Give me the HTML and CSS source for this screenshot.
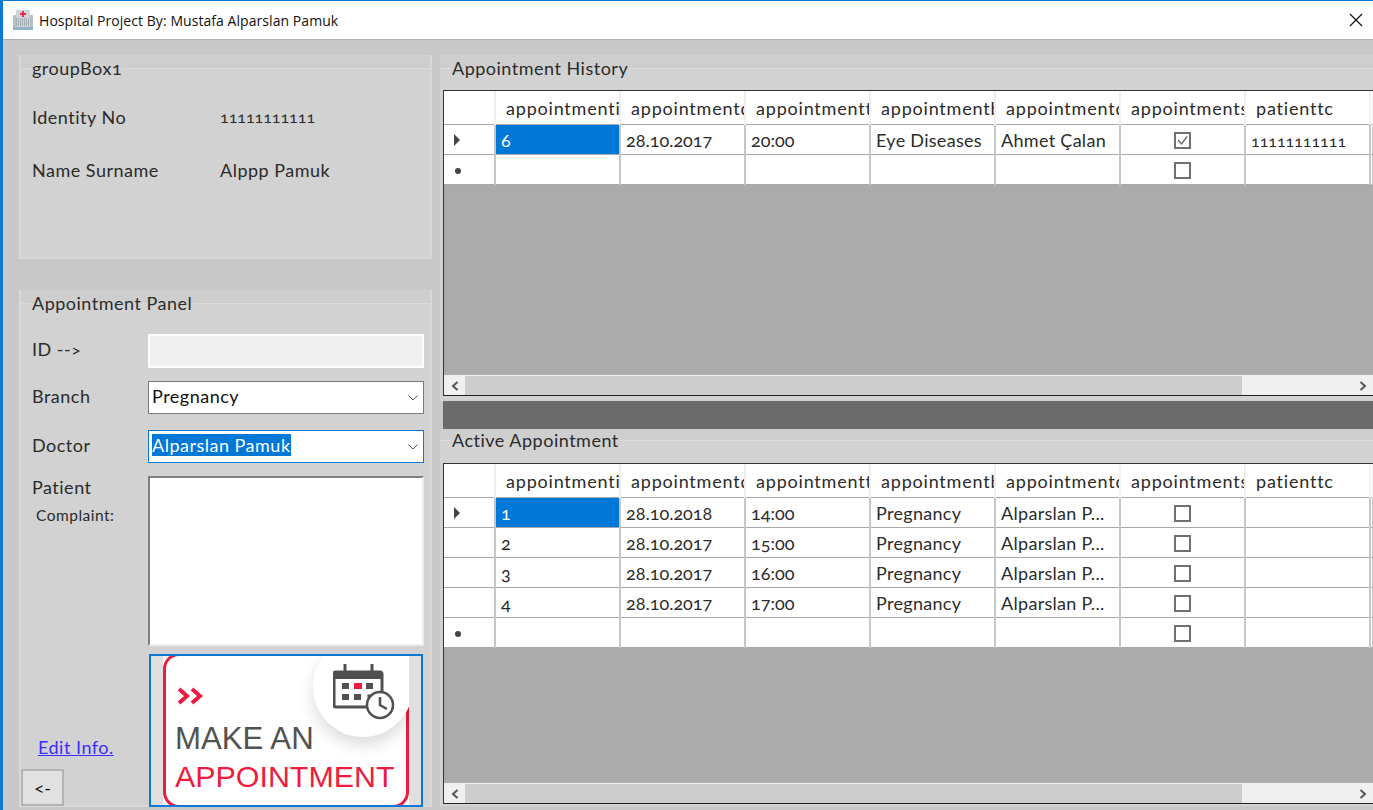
FILE: index.html
```html
<!DOCTYPE html>
<html lang="en">

<head>
    <meta charset="UTF-8">
    <meta name="viewport" content="width=device-width, initial-scale=1.0">
    <title>Hospital Project</title>
    <link rel="stylesheet" href="styles.css">
</head>

<body>
    <div class="window">
        <header class="titlebar">
            <svg class="app-icon" width="20" height="20" viewBox="0 0 20 20">
                <rect x="0" y="5" width="20" height="14" rx="1" fill="#b4c0c4" />
                <rect x="3" y="0" width="14" height="18" rx="1" fill="#ccd5d8" />
                <rect x="0" y="17" width="20" height="3" fill="#8fb3c2" />
                <path d="M3 9h14M3 11h14M3 13h14M3 15h14" stroke="#76868d" stroke-width="1" stroke-dasharray="1 1" />
                <path d="M10 1v6M7 4h6" stroke="#ee2a4b" stroke-width="2" />
            </svg>
            <span class="titlebar-text">Hospital Project By: Mustafa Alparslan Pamuk</span>
            <svg class="close-icon" width="14" height="14" viewBox="0 0 14 14">
                <path d="M1 1l12 12M13 1L1 13" stroke="#111" stroke-width="1.200" fill="none" />
            </svg>
        </header>

        <main class="content">
            <!-- Left side -->
            <div class="left-col">
                <section class="group group-info">
                    <div class="group-title"><span>groupBox1</span></div>
                    <div class="info-row info-row-first">
                        <span class="info-label">Identity No</span>
                        <span class="info-number">11111111111</span>
                    </div>
                    <div class="info-row">
                        <span class="info-label">Name Surname</span>
                        <span>Alppp Pamuk</span>
                    </div>
                </section>

                <section class="group group-panel">
                    <div class="group-title"><span>Appointment Panel</span></div>
                    <div class="form-row form-row-id">
                        <label for="appointment_id">ID --&gt;</label>
                        <input type="text" id="appointment_id" class="field field-disabled" disabled />
                    </div>
                    <div class="form-row form-row-branch">
                        <label>Branch</label>
                        <div class="combo">
                            <span>Pregnancy</span>
                            <svg width="10" height="6" viewBox="0 0 10 6"><path d="M.5.500L5 5 9.500.500" stroke="#555" fill="none" /></svg>
                        </div>
                    </div>
                    <div class="form-row form-row-doctor">
                        <label>Doctor</label>
                        <div class="combo combo-focus">
                            <span class="selected-text">Alparslan Pamuk</span>
                            <svg width="10" height="6" viewBox="0 0 10 6"><path d="M.5.500L5 5 9.500.500" stroke="#555" fill="none" /></svg>
                        </div>
                    </div>
                    <div class="form-row form-row-complaint">
                        <div class="complaint-label">
                            <span>Patient</span>
                            <small>Complaint:</small>
                        </div>
                        <div class="textarea"></div>
                    </div>
                    <div class="form-bottom">
                        <div class="bottom-left">
                            <a href="#" class="edit-link">Edit Info.</a>
                            <button type="button" class="back-btn">&lt;-</button>
                        </div>
                        <div class="banner-btn">
                            <div class="banner">
                                <div class="banner-frame">
                                    <svg class="chevrons" width="28" height="18" viewBox="0 0 28 18">
                                        <path d="M2 2l8 7-8 7M15 2l8 7-8 7" stroke="#ee1c3e" stroke-width="4" fill="none" />
                                    </svg>
                                    <div class="banner-make">MAKE AN</div>
                                    <div class="banner-appointment">APPOINTMENT</div>
                                </div>
                                <div class="banner-circle">
                                    <svg width="64" height="58" viewBox="0 0 64 58">
                                        <path d="M3 10h44a2 2 0 0 1 2 2v22H36v11H3a2 2 0 0 1-2-2V12a2 2 0 0 1 2-2z" fill="none" stroke="#505050" stroke-width="3" />
                                        <path d="M2 10h46v7H2z" fill="#505050" />
                                        <path d="M12 2v10M39 2v10" stroke="#505050" stroke-width="3" />
                                        <rect x="9" y="21" width="7" height="6" fill="#505050" />
                                        <rect x="21" y="21" width="8" height="6" fill="#ee1c3e" />
                                        <rect x="33" y="21" width="7" height="6" fill="#505050" />
                                        <rect x="9" y="32" width="7" height="6" fill="#505050" />
                                        <rect x="21" y="32" width="7" height="6" fill="#505050" />
                                        <circle cx="47" cy="43" r="13" fill="#fff" stroke="#505050" stroke-width="2.500" />
                                        <path d="M47 35v8l7 4" stroke="#505050" stroke-width="2.500" fill="none" />
                                    </svg>
                                </div>
                            </div>
                        </div>
                    </div>
                </section>
            </div>

            <!-- Right side -->
            <div class="right-col">
                <section class="group group-history">
                    <div class="group-title"><span>Appointment History</span></div>
                    <div class="grid grid-history">
                        <table>
                            <tr class="head-row">
                                <th class="row-head"></th>
                                <th><div>appointmentid</div></th>
                                <th><div>appointmentdate</div></th>
                                <th><div>appointmenttime</div></th>
                                <th><div>appointmentbranch</div></th>
                                <th><div>appointmentdoctor</div></th>
                                <th><div>appointmentstate</div></th>
                                <th><div>patienttc</div></th>
                                <th></th>
                            </tr>
                            <tr>
                                <td class="row-head"><i class="row-arrow"></i></td>
                                <td class="cell-selected">6</td>
                                <td class="cell-num">28.10.2017</td>
                                <td class="cell-num">20:00</td>
                                <td>Eye Diseases</td>
                                <td>Ahmet Çalan</td>
                                <td class="cell-check"><span class="check check-on"><svg width="13" height="13" viewBox="0 0 13 13"><path d="M2 6l3.500 4L11 2.500" stroke="#666" stroke-width="1.300" fill="none" /></svg></span></td>
                                <td class="cell-id">11111111111</td>
                                <td></td>
                            </tr>
                            <tr>
                                <td class="row-head"><i class="row-star"></i></td>
                                <td></td>
                                <td></td>
                                <td></td>
                                <td></td>
                                <td></td>
                                <td class="cell-check"><span class="check"></span></td>
                                <td></td>
                                <td></td>
                            </tr>
                        </table>
                        <div class="grid-empty"></div>
                        <div class="scrollbar">
                            <span class="scroll-btn"><svg width="8" height="10" viewBox="0 0 8 10"><path d="M6.500 1L2 5l4.500 4" stroke="#555" stroke-width="2" fill="none" /></svg></span>
                            <span class="scroll-thumb"></span>
                            <span class="scroll-track"></span>
                            <span class="scroll-btn"><svg width="8" height="10" viewBox="0 0 8 10"><path d="M1.500 1L6 5 1.500 9" stroke="#555" stroke-width="2" fill="none" /></svg></span>
                        </div>
                    </div>
                </section>

                <div class="dark-bar"></div>

                <section class="group group-active">
                    <div class="group-title"><span>Active Appointment</span></div>
                    <div class="grid grid-active">
                        <table>
                            <tr class="head-row">
                                <th class="row-head"></th>
                                <th><div>appointmentid</div></th>
                                <th><div>appointmentdate</div></th>
                                <th><div>appointmenttime</div></th>
                                <th><div>appointmentbranch</div></th>
                                <th><div>appointmentdoctor</div></th>
                                <th><div>appointmentstate</div></th>
                                <th><div>patienttc</div></th>
                                <th></th>
                            </tr>
                            <tr>
                                <td class="row-head"><i class="row-arrow"></i></td>
                                <td class="cell-selected">1</td>
                                <td class="cell-num">28.10.2018</td>
                                <td class="cell-num">14:00</td>
                                <td>Pregnancy</td>
                                <td>Alparslan P...</td>
                                <td class="cell-check"><span class="check"></span></td>
                                <td></td>
                                <td></td>
                            </tr>
                            <tr>
                                <td class="row-head"></td>
                                <td>2</td>
                                <td class="cell-num">28.10.2017</td>
                                <td class="cell-num">15:00</td>
                                <td>Pregnancy</td>
                                <td>Alparslan P...</td>
                                <td class="cell-check"><span class="check"></span></td>
                                <td></td>
                                <td></td>
                            </tr>
                            <tr>
                                <td class="row-head"></td>
                                <td>3</td>
                                <td class="cell-num">28.10.2017</td>
                                <td class="cell-num">16:00</td>
                                <td>Pregnancy</td>
                                <td>Alparslan P...</td>
                                <td class="cell-check"><span class="check"></span></td>
                                <td></td>
                                <td></td>
                            </tr>
                            <tr>
                                <td class="row-head"></td>
                                <td>4</td>
                                <td class="cell-num">28.10.2017</td>
                                <td class="cell-num">17:00</td>
                                <td>Pregnancy</td>
                                <td>Alparslan P...</td>
                                <td class="cell-check"><span class="check"></span></td>
                                <td></td>
                                <td></td>
                            </tr>
                            <tr>
                                <td class="row-head"><i class="row-star"></i></td>
                                <td></td>
                                <td></td>
                                <td></td>
                                <td></td>
                                <td></td>
                                <td class="cell-check"><span class="check"></span></td>
                                <td></td>
                                <td></td>
                            </tr>
                        </table>
                        <div class="grid-empty"></div>
                        <div class="scrollbar">
                            <span class="scroll-btn"><svg width="8" height="10" viewBox="0 0 8 10"><path d="M6.500 1L2 5l4.500 4" stroke="#555" stroke-width="2" fill="none" /></svg></span>
                            <span class="scroll-thumb"></span>
                            <span class="scroll-track"></span>
                            <span class="scroll-btn"><svg width="8" height="10" viewBox="0 0 8 10"><path d="M1.500 1L6 5 1.500 9" stroke="#555" stroke-width="2" fill="none" /></svg></span>
                        </div>
                    </div>
                </section>
            </div>
        </main>
    </div>
</body>

</html>
```

FILE: styles.css
```css
/* Reset */
* {
    margin: 0;
    padding: 0;
    box-sizing: border-box;
}

/* Body and Window */
body {
    font-family: 'Lato', 'Open Sans', sans-serif;
    font-size: 18px;
    font-variant-numeric: oldstyle-nums;
    letter-spacing: 0.5px;
    color: #2b2b2b;
    background-color: #c8c8c8;
    overflow: hidden;
}

.window {
    width: 1373px;
    height: 810px;
    border-left: 3px solid #0a7ad6;
    overflow: hidden;
}

/* Title bar */
.titlebar {
    display: flex;
    align-items: center;
    height: 40px;
    padding-left: 10px;
    background: #ffffff;
    border-top: 1px solid #0a7ad6;
    border-bottom: 1px solid #b0b0b0;
}

.app-icon {
    margin-right: 6px;
}

.titlebar-text {
    flex: 1;
    font-family: 'Open Sans', sans-serif;
    font-size: 14px;
    letter-spacing: 0.06px;
    color: #111;
}

.close-icon {
    margin-right: 10px;
}

/* Main layout */
.content {
    display: flex;
    gap: 8px;
    padding: 15px 0 0 16px;
}

.left-col {
    width: 413px;
    flex: none;
}

.right-col {
    flex: 1;
    min-width: 0;
}

/* Group boxes */
.group {
    background: #d2d2d2;
    border-left: 2px solid #d8d8d8;
    border-right: 2px solid #d8d8d8;
    border-bottom: 2px solid #d8d8d8;
}

.group-title {
    display: flex;
    align-items: center;
    height: 26px;
    background: linear-gradient(#cecece 50%, #d2d2d2 50%);
}

.group-title::before {
    content: "";
    width: 9px;
    height: 1px;
    background: #dcdcdc;
}

.group-title::after {
    content: "";
    flex: 1;
    height: 1px;
    background: #dcdcdc;
}

.group-title span {
    padding: 0 2px 1px;
}

.group-info {
    height: 204px;
}

.info-row {
    display: flex;
    align-items: center;
    height: 24px;
    padding-left: 11px;
    margin-top: 29px;
}

.info-row-first {
    margin-top: 24px;
}

.info-label {
    width: 188px;
    padding-bottom: 1px;
}

.info-number {
    padding-bottom: 2px;
    font-size: 16px;
    letter-spacing: 0;
}

.group-panel {
    margin-top: 31px;
    height: 517px;
}

/* Form */
.form-row {
    display: flex;
    align-items: center;
    padding-left: 11px;
}

.form-row label,
.complaint-label {
    width: 116px;
    flex: none;
}

.form-row label {
    padding-bottom: 3px;
}

.form-row-id label {
    padding-bottom: 5px;
}

.form-row-id {
    margin-top: 18px;
}

.form-row-branch {
    margin-top: 13px;
}

.form-row-doctor {
    margin-top: 16px;
}

.form-row-complaint {
    align-items: flex-start;
    margin-top: 13px;
}

.field {
    width: 276px;
    height: 34px;
}

.field-disabled {
    background: #f0f0f0;
    border: 2px solid #ffffff;
}

.combo {
    display: flex;
    align-items: center;
    justify-content: space-between;
    width: 276px;
    height: 33px;
    padding: 0 5px 3px 3px;
    background: #ffffff;
    border: 1px solid #7a7a7a;
    color: #111;
}

.combo svg {
    margin-top: 3px;
}

.combo-focus {
    border-color: #0a7ad6;
}

.selected-text {
    background: #0078d7;
    color: #ffffff;
}

.complaint-label span {
    display: block;
}

.complaint-label small {
    display: block;
    font-size: 15.500px;
    margin: 8px 0 0 4px;
}

.textarea {
    width: 276px;
    height: 170px;
    background: #ffffff;
    border: 2px solid #ececec;
    border-top-color: #808080;
    border-left-color: #808080;
}

.form-bottom {
    display: flex;
    margin-top: 8px;
}

.bottom-left {
    display: flex;
    flex-direction: column;
    align-items: flex-start;
    justify-content: flex-end;
    width: 128px;
    flex: none;
}

.edit-link {
    margin: 0 0 11px 17px;
    color: #3a2cff;
}

.back-btn {
    width: 43px;
    height: 37px;
    margin-bottom: 1px;
    font-family: inherit;
    font-size: 18px;
    color: #111;
    background: #e1e1e1;
    border: 2px solid #b4b4b4;
}

/* Banner */
.banner-btn {
    width: 274px;
    height: 153px;
    padding: 0 12px 0 12px;
    background: #e0e0e0;
    border: 2px solid #0a7ad6;
    letter-spacing: 0;
}

.banner {
    position: relative;
    height: 100%;
    background: #ffffff;
    overflow: hidden;
}

.banner-frame {
    height: 155px;
    margin-top: -3px;
    padding: 31px 0 0 9px;
    border: 3px solid #ee1c3e;
    border-radius: 16px;
    font-family: 'Liberation Sans', sans-serif;
}

.chevrons {
    display: block;
    margin-left: 2px;
}

.banner-make {
    margin-top: 15px;
    font-size: 31.200px;
    line-height: 38px;
    color: #525252;
}

.banner-appointment {
    font-size: 30.400px;
    line-height: 36px;
    color: #ee1c3e;
}

.banner-circle {
    position: absolute;
    top: -19px;
    right: -4px;
    width: 100px;
    height: 100px;
    padding: 25px 0 0 20px;
    border-radius: 50%;
    background: #ffffff;
    box-shadow: 0 8px 16px rgba(0, 0, 0, 0.14);
}

/* Hides the corner of the frame above the circle */
.banner-circle::after {
    content: "";
    position: absolute;
    top: 19px;
    right: 0;
    width: 30px;
    height: 30px;
    background: #ffffff;
}

.banner-circle svg {
    position: relative;
    z-index: 1;
}

/* Right groups */
.right-col .group {
    border: none;
    padding-left: 3px;
}

.right-col .group-title {
    margin-left: -3px;
}

.right-col .group-title::before {
    width: 10px;
}

.group-history {
    height: 346px;
}

.group-history .group-title {
    margin-bottom: 9px;
}

.dark-bar {
    height: 28px;
    margin-left: 3px;
    background: #6b6b6b;
}

.group-active {
    height: 377px;
}

.group-active .group-title {
    height: 22px;
    margin-bottom: 12px;
}

/* Data grid */
.grid {
    display: flex;
    flex-direction: column;
    border-top: 1px solid #333;
    border-left: 1px solid #333;
    border-bottom: 1px solid #222;
    background: #ababab;
}

.grid-history {
    height: 306px;
}

.grid-active {
    height: 341px;
}

.grid table {
    width: 930px;
    flex: none;
    table-layout: fixed;
    border-collapse: collapse;
    background: #ffffff;
}

.grid th,
.grid td {
    width: 125px;
    height: 30px;
    padding: 2px 0 0 5px;
    font-weight: normal;
    text-align: left;
    letter-spacing: 0.3px;
    white-space: nowrap;
    overflow: hidden;
    border-right: 2px solid #c6c6c6;
    border-bottom: 1px solid #a8a8a8;
}

.grid .cell-num {
    letter-spacing: 0;
}

.grid .cell-id {
    font-size: 16px;
    letter-spacing: 0;
}

.grid .row-head {
    width: 51px;
    padding: 0;
}

.grid th:last-child,
.grid td:last-child {
    width: auto;
}

.head-row th {
    height: 33px;
    padding: 2px 0 0 10px;
    letter-spacing: 0.8px;
    border-right-color: #efefef;
}

.head-row th div {
    overflow: hidden;
}

.cell-selected {
    background: #0078d7;
    color: #ffffff;
}

.row-arrow {
    display: block;
    width: 0;
    height: 0;
    margin: 1px 0 0 10px;
    border-top: 6px solid transparent;
    border-bottom: 6px solid transparent;
    border-left: 6px solid #444;
}

.row-star {
    display: block;
    width: 6px;
    height: 6px;
    margin: 3px 0 0 11px;
    border-radius: 50%;
    background: #444;
}

.grid .cell-check {
    padding: 0;
    text-align: center;
}

.check {
    display: inline-block;
    width: 17px;
    height: 17px;
    margin-top: -2px;
    vertical-align: middle;
    border: 2px solid #707070;
    background: #ffffff;
}

.check svg {
    display: block;
}

.grid-empty {
    flex: 1;
}

.scrollbar {
    display: flex;
    height: 20px;
    flex: none;
    border-top: 1px solid #f0f0f0;
    background: #f0f0f0;
}

.scroll-btn {
    display: flex;
    align-items: center;
    justify-content: center;
    width: 21px;
}

.scroll-thumb {
    width: 777px;
    background: #cdcdcd;
}

.scroll-track {
    flex: 1;
}
```
